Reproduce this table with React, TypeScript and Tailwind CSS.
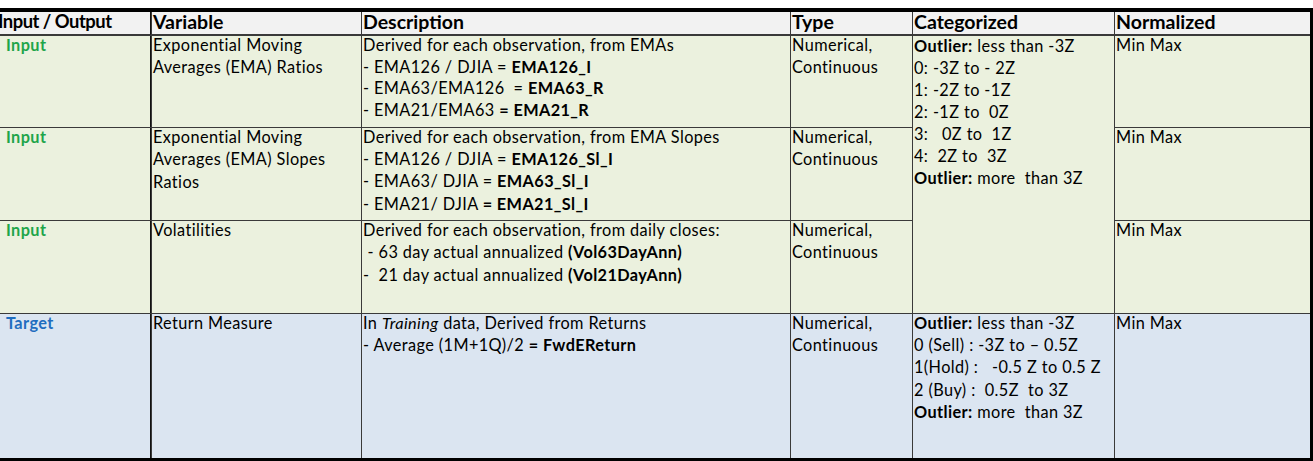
import React from 'react'

const GREEN = 'bg-[#ebf1de]'
const BLUE = 'bg-[#dbe5f1]'

function B({ children }: { children: React.ReactNode }) {
  return <span className="font-bold">{children}</span>
}

function Lines({ lines, className = '' }: { lines: React.ReactNode[]; className?: string }) {
  return (
    <div className={`-mt-[2px] leading-[21.7px] whitespace-pre ${className}`}>
      {lines.map((l, i) => (
        <div key={i}>{l}</div>
      ))}
    </div>
  )
}

export default function App() {
  const head = 'bg-[#f2f2f2] border-b border-[#3a3a3a] text-[19.5px] font-bold leading-none text-black whitespace-nowrap'
  const body = 'text-[16.3px] tracking-[0.4px] text-black'

  return (
    <div className="w-[1313px] h-[461px] bg-white pt-[8px] font-['Lato',sans-serif] overflow-hidden">
      <div className="border-t-4 border-r-[3px] border-b-[3px] border-black">
        <div className="grid grid-cols-[151px_209px_428px_121px_201px_195px] grid-rows-[23px_91px_92px_92px_144px] gap-px bg-[#3a3a3a]">
          {/* ── Header ── */}
          <div className={`${head} border-r border-r-[#111]`}>
            <div className="-ml-[2px] text-[18.4px] tracking-[-0.5px]">Input / Output</div>
          </div>
          <div className={`${head} pl-[1px]`}>Variable</div>
          <div className={`${head} pl-[1px]`}>Description</div>
          <div className={`${head} pl-[1px]`}>Type</div>
          <div className={`${head} pl-[1px]`}>Categorized</div>
          <div className={`${head} pl-[1px]`}>Normalized</div>

          {/* ── Row 1: EMA ratios ── */}
          <div className={`${GREEN} ${body} border-r border-[#111] pl-[6px]`}>
            <Lines lines={[<span className="font-bold text-[#1ea54a]">Input</span>]} />
          </div>
          <div className={`${GREEN} ${body} pl-[1px]`}>
            <Lines lines={['Exponential Moving', 'Averages (EMA) Ratios']} />
          </div>
          <div className={`${GREEN} ${body} pl-[1px]`}>
            <Lines
              lines={[
                'Derived for each observation, from EMAs',
                <>- EMA126 / DJIA = <B>EMA126_I</B></>,
                <>- EMA63/EMA126  = <B>EMA63_R</B></>,
                <>- EMA21/EMA63 <B>= EMA21_R</B></>,
              ]}
            />
          </div>
          <div className={`${GREEN} ${body} pl-[1px]`}>
            <Lines lines={['Numerical,', 'Continuous']} />
          </div>
          <div className={`${GREEN} ${body} row-span-3 pl-[1px]`}>
            <Lines
              className="leading-[22px] mt-[-1px]"
              lines={[
                <><B>Outlier:</B> less than -3Z</>,
                '0: -3Z to - 2Z',
                '1: -2Z to -1Z',
                '2: -1Z to  0Z',
                '3:   0Z to  1Z',
                '4:  2Z to  3Z',
                <><B>Outlier:</B> more  than 3Z</>,
              ]}
            />
          </div>
          <div className={`${GREEN} ${body} pl-[1px]`}>
            <Lines lines={['Min Max']} />
          </div>

          {/* ── Row 2: EMA slopes ── */}
          <div className={`${GREEN} ${body} border-r border-[#111] pl-[6px]`}>
            <Lines lines={[<span className="font-bold text-[#1ea54a]">Input</span>]} />
          </div>
          <div className={`${GREEN} ${body} pl-[1px]`}>
            <Lines lines={['Exponential Moving', 'Averages (EMA) Slopes', 'Ratios']} className="leading-[22.4px]" />
          </div>
          <div className={`${GREEN} ${body} pl-[1px]`}>
            <Lines
              className="leading-[22.2px]"
              lines={[
                'Derived for each observation, from EMA Slopes',
                <>- EMA126 / DJIA = <B>EMA126_Sl_I</B></>,
                <>- EMA63/ DJIA = <B>EMA63_Sl_I</B></>,
                <>- EMA21/ DJIA <B>= EMA21_Sl_I</B></>,
              ]}
            />
          </div>
          <div className={`${GREEN} ${body} pl-[1px]`}>
            <Lines lines={['Numerical,', 'Continuous']} />
          </div>
          <div className={`${GREEN} ${body} pl-[1px]`}>
            <Lines lines={['Min Max']} />
          </div>

          {/* ── Row 3: Volatilities ── */}
          <div className={`${GREEN} ${body} border-r border-[#111] pl-[6px]`}>
            <Lines lines={[<span className="font-bold text-[#1ea54a]">Input</span>]} />
          </div>
          <div className={`${GREEN} ${body} pl-[1px]`}>
            <Lines lines={['Volatilities']} />
          </div>
          <div className={`${GREEN} ${body} pl-[1px]`}>
            <Lines
              className="leading-[22.3px]"
              lines={[
                'Derived for each observation, from daily closes:',
                <> - 63 day actual annualized <B>(Vol63DayAnn)</B></>,
                <>-  21 day actual annualized <B>(Vol21DayAnn)</B></>,
              ]}
            />
          </div>
          <div className={`${GREEN} ${body} pl-[1px]`}>
            <Lines lines={['Numerical,', 'Continuous']} />
          </div>
          <div className={`${GREEN} ${body} pl-[1px]`}>
            <Lines lines={['Min Max']} />
          </div>

          {/* ── Row 4: Target ── */}
          <div className={`${BLUE} ${body} border-r border-[#111] pl-[6px]`}>
            <Lines lines={[<span className="font-bold text-[#1f6dbf]">Target</span>]} />
          </div>
          <div className={`${BLUE} ${body} pl-[1px]`}>
            <Lines lines={['Return Measure']} />
          </div>
          <div className={`${BLUE} ${body} pl-[1px]`}>
            <Lines
              lines={[
                <>In <i>Training</i> data, Derived from Returns</>,
                <>- Average (1M+1Q)/2 <B>= FwdEReturn</B></>,
              ]}
            />
          </div>
          <div className={`${BLUE} ${body} pl-[1px]`}>
            <Lines className="leading-[20px]" lines={['Numerical,', 'Continuous']} />
          </div>
          <div className={`${BLUE} ${body} pl-[1px]`}>
            <Lines
              className="leading-[22.2px]"
              lines={[
                <><B>Outlier:</B> less than -3Z</>,
                '0 (Sell) : -3Z to \u2013 0.5Z',
                '1(Hold) :   -0.5 Z to 0.5 Z',
                '2 (Buy) :  0.5Z  to 3Z',
                <><B>Outlier:</B> more  than 3Z</>,
              ]}
            />
          </div>
          <div className={`${BLUE} ${body} pl-[1px]`}>
            <Lines lines={['Min Max']} />
          </div>
        </div>
      </div>
    </div>
  )
}
